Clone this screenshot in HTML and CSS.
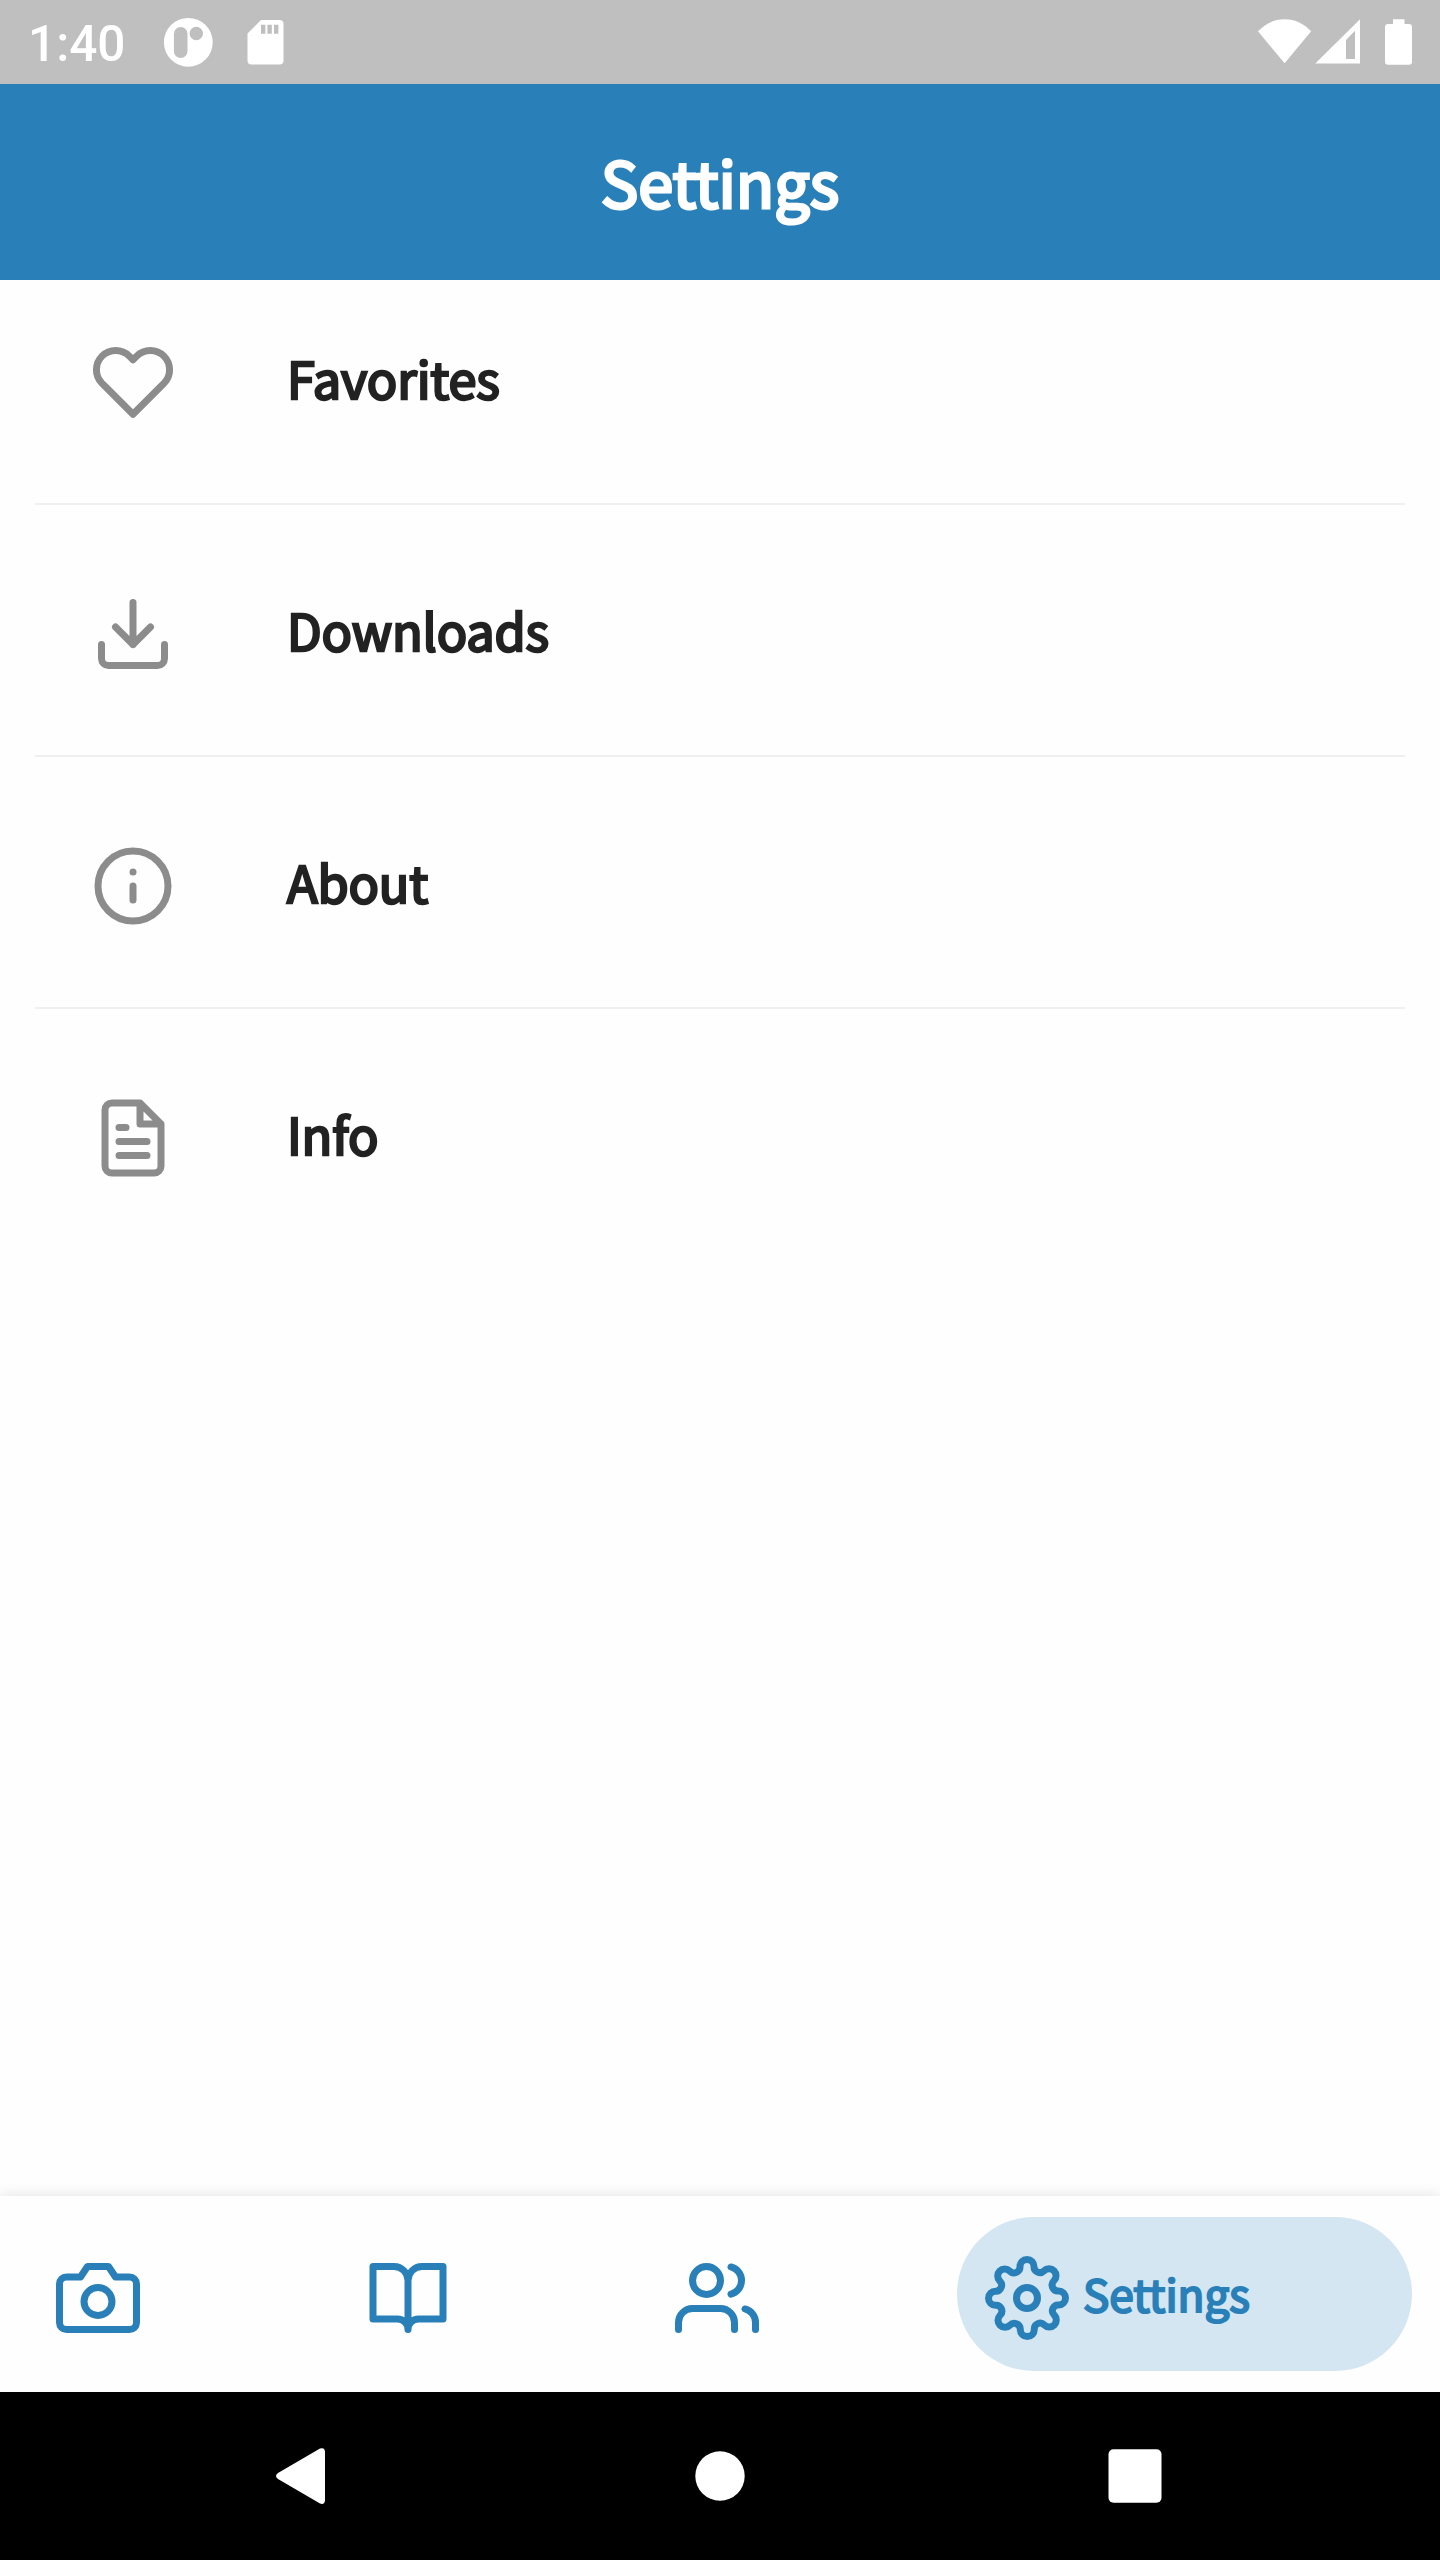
FILE: index.html
```html
<!DOCTYPE html>
<html lang="en">
<head>
<meta charset="utf-8">
<title>Settings</title>
<link rel="stylesheet" href="styles.css">
</head>
<body>
<div class="screen">
  <div class="status">
    <span class="clock">1:40</span>
    <svg class="status-left" width="130" height="84" viewBox="160 0 130 84">
      <path fill-rule="evenodd" d="M188.3 17.9a24.4 24.4 0 1 0 0 48.8a24.4 24.4 0 1 0 0-48.8zM180.7 27a6.8 6.8 0 0 1 6.8 6.8v17.5a6.8 6.8 0 0 1-13.6 0V33.8a6.8 6.8 0 0 1 6.8-6.8zM196.3 26.8a6.7 6.7 0 1 1 0 13.4a6.7 6.7 0 1 1 0-13.4z"/>
      <path fill-rule="evenodd" d="M261 20h18.5a4 4 0 0 1 4 4v36.500a4 4 0 0 1-4 4h-28a4 4 0 0 1-4-4V33.500zM261 24.700v9.100h4.400v-9.100zM267.400 24.700v9.100h4.400v-9.100zM274 24.700v9.100h4.400v-9.100z"/>
    </svg>
    <svg class="status-right" width="190" height="84" viewBox="1250 0 190 84">
      <path d="M1284.600 63.300L1258 31.300C1265 24 1274 19.300 1284.600 19.300S1304 24 1311.200 31.300z"/>
      <path fill-rule="evenodd" d="M1315.300 63.500L1360 19.300V63.500zM1346 40V59H1355V30.800z"/>
      <path d="M1393 19.300h11.500V24h4.500a3 3 0 0 1 3 3v34.700a3 3 0 0 1-3 3h-21a3 3 0 0 1-3-3V27a3 3 0 0 1 3-3h5z"/>
    </svg>
  </div>
  <header class="header"><h1 class="title">Settings</h1></header>
  <main class="list">
    <div class="row">
      <svg class="icon" viewBox="0 0 24 24"><path d="M20.840 4.610a5.500 5.500 0 0 0-7.780 0L12 5.670l-1.060-1.060a5.500 5.500 0 0 0-7.780 7.780l1.060 1.060L12 21.230l7.780-7.780 1.060-1.060a5.500 5.500 0 0 0 0-7.780z"/></svg>
      <span class="label">Favorites</span>
    </div>
    <div class="row">
      <svg class="icon" viewBox="0 0 24 24"><path d="M21 15v4a2 2 0 0 1-2 2H5a2 2 0 0 1-2-2v-4M7 10l5 5 5-5M12 15V3"/></svg>
      <span class="label">Downloads</span>
    </div>
    <div class="row">
      <svg class="icon" viewBox="0 0 24 24"><circle cx="12" cy="12" r="10"/><path d="M12 16v-4M12 8h.01"/></svg>
      <span class="label">About</span>
    </div>
    <div class="row">
      <svg class="icon" viewBox="0 0 24 24"><path d="M14 2H6a2 2 0 0 0-2 2v16a2 2 0 0 0 2 2h12a2 2 0 0 0 2-2V8zM14 2v6h6M16 13H8M16 17H8M10 9H8"/></svg>
      <span class="label">Info</span>
    </div>
  </main>
  <nav class="tabs">
    <div class="tab"><svg class="icon" viewBox="0 0 24 24"><path d="M23 19a2 2 0 0 1-2 2H3a2 2 0 0 1-2-2V8a2 2 0 0 1 2-2h4l2-3h6l2 3h4a2 2 0 0 1 2 2z"/><circle cx="12" cy="13" r="4"/></svg></div>
    <div class="tab"><svg class="icon" viewBox="0 0 24 24"><path d="M2 3h6a4 4 0 0 1 4 4v14a3 3 0 0 0-3-3H2zM22 3h-6a4 4 0 0 0-4 4v14a3 3 0 0 1 3-3h7z"/></svg></div>
    <div class="tab"><svg class="icon" viewBox="0 0 24 24"><path d="M17 21v-2a4 4 0 0 0-4-4H5a4 4 0 0 0-4 4v2M23 21v-2a4 4 0 0 0-3-3.870M16 3.130a4 4 0 0 1 0 7.750"/><circle cx="9" cy="7" r="4"/></svg></div>
    <div class="tab tab-active"><svg class="icon" viewBox="0 0 24 24"><circle cx="12" cy="12" r="3"/><path d="M19.400 15a1.650 1.650 0 0 0 .33 1.820l.06.06a2 2 0 0 1 0 2.830 2 2 0 0 1-2.830 0l-.06-.06a1.650 1.650 0 0 0-1.820-.33 1.650 1.650 0 0 0-1 1.510V21a2 2 0 0 1-2 2 2 2 0 0 1-2-2v-.09A1.650 1.650 0 0 0 9 19.400a1.650 1.650 0 0 0-1.820.33l-.06.06a2 2 0 0 1-2.830 0 2 2 0 0 1 0-2.830l.06-.06a1.650 1.650 0 0 0 .33-1.820 1.650 1.650 0 0 0-1.510-1H3a2 2 0 0 1-2-2 2 2 0 0 1 2-2h.09A1.650 1.650 0 0 0 4.600 9a1.650 1.650 0 0 0-.33-1.820l-.06-.06a2 2 0 0 1 0-2.830 2 2 0 0 1 2.830 0l.06.06a1.650 1.650 0 0 0 1.820.33H9a1.650 1.650 0 0 0 1-1.510V3a2 2 0 0 1 2-2 2 2 0 0 1 2 2v.09a1.650 1.650 0 0 0 1 1.510 1.650 1.650 0 0 0 1.820-.33l.06-.06a2 2 0 0 1 2.830 0 2 2 0 0 1 0 2.830l-.06.06a1.650 1.650 0 0 0-.33 1.820V9a1.650 1.650 0 0 0 1.510 1H21a2 2 0 0 1 2 2 2 2 0 0 1-2 2h-.09a1.650 1.650 0 0 0-1.510 1z"/></svg><span class="tab-label">Settings</span></div>
  </nav>
  <div class="system">
    <svg width="1440" height="168" viewBox="0 2392 1440 168">
      <path d="M325 2451.500V2500.500Q324.500 2505 320 2503.500L278 2479Q274 2476 278 2473L320 2448.500Q324.500 2447 325 2451.500z"/>
      <circle cx="720" cy="2476" r="24.700"/>
      <rect x="1108.500" y="2449.300" width="53" height="53.400" rx="5"/>
    </svg>
  </div>
</div>
</body>
</html>
```
FILE: styles.css
```css
* { box-sizing: border-box; }
body { margin: 0; background: #fefefe; }
.screen {
  width: 1440px;
  height: 2560px;
  display: flex;
  flex-direction: column;
  overflow: hidden;
  font-family: "Noto Sans CJK SC", "Noto Sans", sans-serif;
}
.status {
  height: 84px;
  flex: none;
  display: flex;
  background: #bfbfbf;
  color: #fff;
}
.status svg { fill: #fff; }
.clock {
  width: 132px;
  margin-left: 28px;
  font: 500 49.5px/88px Roboto, sans-serif;
}
.status-right { margin-left: auto; }
.header {
  height: 196px;
  flex: none;
  background: #2980b9;
  color: #fff;
  text-align: center;
}
.title {
  margin: 0;
  font-size: 63px;
  font-weight: 400;
  line-height: 194px;
  -webkit-text-stroke: 3px currentColor;
}
.list {
  flex: 1;
  padding: 0 35px;
}
.row {
  height: 252px;
  display: flex;
  padding: 87px 0 0 56px;
  border-bottom: 2px solid #efefef;
}
.row:first-child { height: 225px; padding-top: 60px; }
.row:last-child { border-bottom: 0; }
.icon {
  width: 84px;
  height: 84px;
  flex: none;
  fill: none;
  stroke: currentColor;
  stroke-width: 2;
  stroke-linecap: round;
  stroke-linejoin: round;
}
.row .icon { color: #8c8c8c; }
.label {
  height: 84px;
  margin: -4px 0 0 112px;
  color: #222;
  font-size: 50.4px;
  line-height: 84px;
  letter-spacing: -.15px;
  -webkit-text-stroke: 2.5px currentColor;
}
.tabs {
  height: 196px;
  flex: none;
  display: flex;
  align-items: center;
  justify-content: space-between;
  padding: 0 28px;
  background: #fefefe;
  box-shadow: 0 0 14px rgba(0, 0, 0, .12);
  color: #2980b9;
}
.tab {
  height: 154px;
  display: flex;
  padding: 39px 28px 0;
}
.tab-active {
  width: 455px;
  border-radius: 77px;
  background: #d4e6f1;
}
.tab-label {
  margin-left: 14px;
  font-size: 44.1px;
  line-height: 75px;
  -webkit-text-stroke: 2.1px currentColor;
}
.system {
  height: 168px;
  flex: none;
  background: #000;
}
.system svg { display: block; fill: #fff; }
```
